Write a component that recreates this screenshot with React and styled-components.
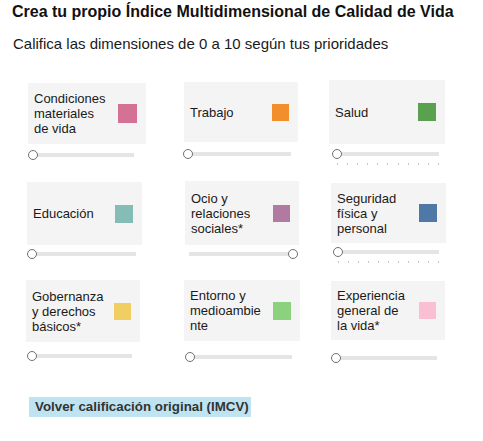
import React from "react";
import styled, { createGlobalStyle } from "styled-components";

const Global = createGlobalStyle`
  html, body { margin: 0; padding: 0; background: #ffffff; }
  body { font-family: "Liberation Sans", Arial, sans-serif; color: #1a1a1a; }
`;

const Page = styled.div`
  width: 483px;
  height: 441px;
  overflow: hidden;
  display: flex;
  flex-direction: column;
  align-items: flex-start;
`;

const Title = styled.h1`
  margin: 3px 0 0 12px;
  font-size: 16px;
  line-height: 18px;
  font-weight: 700;
  color: #111;
`;

const Subtitle = styled.p`
  margin: 14px 0 0 13px;
  font-size: 15px;
  line-height: 17px;
  color: #1a1a1a;
`;

const Grid = styled.div`
  margin: 28px 0 0 26px;
  display: grid;
  grid-template-columns: 156px 146px 150px;
  grid-auto-rows: 99px;
`;

const Cell = styled.div`
  display: flex;
  flex-direction: column;
  align-items: flex-start;
`;

const Card = styled.div`
  margin: ${(p) => p.$dy}px 0 0 ${(p) => p.$dx}px;
  width: ${(p) => p.$w}px;
  height: ${(p) => p.$h}px;
  box-sizing: border-box;
  background: #f4f4f4;
  display: flex;
  align-items: center;
  justify-content: space-between;
  padding: 0 9px 0 6px;
`;

const Label = styled.div`
  width: 73px;
  font-size: 13px;
  line-height: 15px;
  color: #1a1a1a;
  overflow-wrap: break-word;
  word-break: break-word;
`;

const Swatch = styled.div`
  width: ${(p) => p.$s}px;
  height: ${(p) => p.$s}px;
  background: ${(p) => p.$c};
  flex: none;
`;

const SliderBox = styled.div`
  position: relative;
  margin: ${(p) => p.$gap}px 0 0 ${(p) => p.$sx}px;
  width: ${(p) => p.$w}px;
  height: 10px;
`;

const Track = styled.div`
  position: absolute;
  left: ${(p) => (p.$full ? "0" : "5px")};
  right: ${(p) => (p.$full ? "5px" : "0")};
  top: 3px;
  height: 4px;
  background: #e5e5e5;
`;

const Thumb = styled.div`
  position: absolute;
  top: 0;
  left: ${(p) => (p.$full ? "calc(100% - 10px)" : "0")};
  width: 10px;
  height: 10px;
  box-sizing: border-box;
  border-radius: 50%;
  border: 1.5px solid #707070;
  background: #fff;
`;

const Ticks = styled.div`
  position: absolute;
  left: 5px;
  right: 0;
  top: 14px;
  display: flex;
  justify-content: space-between;
`;

const Tick = styled.span`
  width: 1px;
  height: 2px;
  background: #c4c4c4;
`;

const Button = styled.button`
  margin: 20px 0 0 29px;
  padding: 0 2px 0 6px;
  height: 20px;
  border: none;
  background: #bee3f1;
  font-family: "Liberation Sans", Arial, sans-serif;
  font-size: 13.33px;
  font-weight: 700;
  color: #333;
  line-height: 20px;
  cursor: pointer;
`;

const items = [
  { label: "Condiciones materiales de vida", color: "#d37295", dx: 2, dy: 3, w: 118, h: 61, s: 19, gap: 6, sx: 2, sw: 106 },
  { label: "Trabajo", color: "#f28e2b", dx: 2, dy: 2, w: 114, h: 60, s: 17, gap: 7, sx: 1, sw: 108 },
  { label: "Salud", color: "#59a14f", dx: 1, dy: 0, w: 116, h: 64, s: 18, gap: 5, sx: 4, sw: 107, ticks: true },
  { label: "Educación", color: "#86bcb6", dx: 1, dy: 3, w: 115, h: 63, s: 18, gap: 4, sx: 1, sw: 109 },
  { label: "Ocio y relaciones sociales*", color: "#b07aa1", dx: 3, dy: 2, w: 114, h: 64, s: 17, gap: 4, sx: 7, sw: 109, full: true },
  { label: "Seguridad física y personal", color: "#4e79a7", dx: 3, dy: 4, w: 115, h: 60, s: 18, gap: 4, sx: 5, sw: 106, ticks: true },
  { label: "Gobernanza y derechos básicos*", color: "#f1ce63", dx: 0, dy: 2, w: 114, h: 62, s: 17, gap: 9, sx: 1, sw: 105 },
  { label: "Entorno y medioambiente", color: "#8cd17d", dx: 2, dy: 2, w: 116, h: 61, s: 18, gap: 11, sx: 3, sw: 107 },
  { label: "Experiencia general de la vida*", color: "#fabfd2", dx: 3, dy: 3, w: 114, h: 59, s: 17, gap: 13, sx: 3, sw: 106 },
];

function Slider({ it }) {
  return (
    <SliderBox $gap={it.gap} $sx={it.sx} $w={it.sw}>
      <Track $full={it.full} />
      <Thumb $full={it.full} />
      {it.ticks && (
        <Ticks>
          {Array.from({ length: 11 }).map((_, i) => (
            <Tick key={i} />
          ))}
        </Ticks>
      )}
    </SliderBox>
  );
}

export default function App() {
  return (
    <Page>
      <Global />
      <Title>Crea tu propio Índice Multidimensional de Calidad de Vida</Title>
      <Subtitle>Califica las dimensiones de 0 a 10 según tus prioridades</Subtitle>
      <Grid>
        {items.map((it) => (
          <Cell key={it.label}>
            <Card $dx={it.dx} $dy={it.dy} $w={it.w} $h={it.h}>
              <Label>{it.label}</Label>
              <Swatch $c={it.color} $s={it.s} />
            </Card>
            <Slider it={it} />
          </Cell>
        ))}
      </Grid>
      <Button>Volver calificación original (IMCV)</Button>
    </Page>
  );
}
